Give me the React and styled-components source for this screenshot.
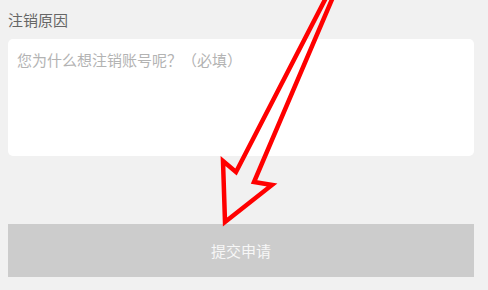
import React from 'react'
import styled, { createGlobalStyle } from 'styled-components'

const GlobalStyle = createGlobalStyle`
  html, body {
    margin:0;
    padding:0;
    background-color:#f1f1f1;
  }
  body {
    font-family:"Noto Sans CJK SC", "Noto Sans", sans-serif;
  }
`;

const Page = styled.main`
  position:relative;
  width:488px;
  height:290px;
  overflow:hidden;
  padding:0 14px 0 8px;
  box-sizing:border-box;
  display:flex;
  flex-direction:column;
`;

const Label = styled.div`
  height:40px;
  display:flex;
  align-items:center;
  font-size:15px;
  color:#666666;
  margin-top:-1px;
`;

const ReasonBox = styled.textarea`
  width:100%;
  height:117px;
  box-sizing:border-box;
  border:none;
  border-radius:5px;
  background-color:#ffffff;
  padding:9px 9px;
  font-family:inherit;
  font-size:15px;
  line-height:24px;
  color:#333;
  resize:none;
  outline:none;

  &::placeholder{
    color:#b3b3b3;
  }
`;

const SubmitButton = styled.button`
  margin-top:68px;
  width:100%;
  height:53px;
  border:none;
  border-radius:0;
  background-color:#cccccc;
  color:#f7f7f7;
  font-family:inherit;
  font-size:15px;
`;

const Arrow = styled.svg`
  position:absolute;
  left:0;
  top:0;
  pointer-events:none;
`;

const App = () => {
  return (
    <>
      <GlobalStyle />
      <Page>
        <Label>注销原因</Label>
        <ReasonBox placeholder="您为什么想注销账号呢？（必填）" />
        <SubmitButton disabled>提交申请</SubmitButton>
        {/* 标注箭头 */}
        <Arrow width="488" height="290" viewBox="0 0 488 290">
          <polygon
            points="330,-10 236,172 223,161 225,222 272,185 254,182 336,-10"
            fill="none"
            stroke="#ff0000"
            strokeWidth="4.5"
            strokeLinejoin="miter"
          />
        </Arrow>
      </Page>
    </>
  )
}

export default App
